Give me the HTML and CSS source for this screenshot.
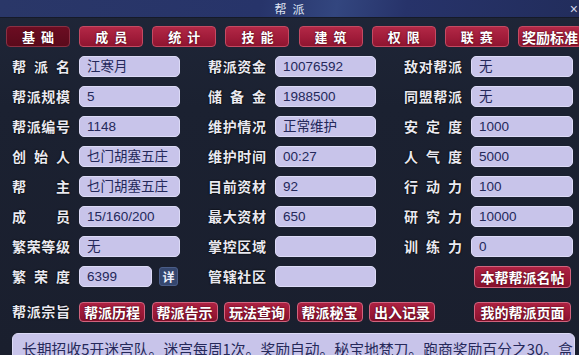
FILE: index.html
```html
<!DOCTYPE html>
<html lang="zh-CN">
<head>
  <meta charset="UTF-8" />
  <meta name="viewport" content="width=device-width, initial-scale=1.0"/>
  <title>帮派</title>
  <link rel="stylesheet" href="styles.css">
</head>
<body>
  <div class="window">
    <header class="titlebar">
      <span></span>
      <h1 class="title">帮派</h1>
      <span class="close">×</span>
    </header>

    <nav class="tabs">
      <button class="tab active">基础</button>
      <button class="tab">成员</button>
      <button class="tab">统计</button>
      <button class="tab">技能</button>
      <button class="tab">建筑</button>
      <button class="tab">权限</button>
      <button class="tab">联赛</button>
      <button class="tab tab-long">奖励标准</button>
    </nav>

    <!-- info grid: three columns of label + field -->
    <section class="info">
      <div class="cell"><span class="label">帮派名</span><span class="field">江寒月</span></div>
      <div class="cell"><span class="label">帮派资金</span><span class="field">10076592</span></div>
      <div class="cell"><span class="label">敌对帮派</span><span class="field">无</span></div>

      <div class="cell"><span class="label">帮派规模</span><span class="field">5</span></div>
      <div class="cell"><span class="label">储备金</span><span class="field">1988500</span></div>
      <div class="cell"><span class="label">同盟帮派</span><span class="field">无</span></div>

      <div class="cell"><span class="label">帮派编号</span><span class="field">1148</span></div>
      <div class="cell"><span class="label">维护情况</span><span class="field">正常维护</span></div>
      <div class="cell"><span class="label">安定度</span><span class="field">1000</span></div>

      <div class="cell"><span class="label">创始人</span><span class="field">乜门胡塞五庄</span></div>
      <div class="cell"><span class="label">维护时间</span><span class="field">00:27</span></div>
      <div class="cell"><span class="label">人气度</span><span class="field">5000</span></div>

      <div class="cell"><span class="label">帮主</span><span class="field">乜门胡塞五庄</span></div>
      <div class="cell"><span class="label">目前资材</span><span class="field">92</span></div>
      <div class="cell"><span class="label">行动力</span><span class="field">100</span></div>

      <div class="cell"><span class="label">成员</span><span class="field">15/160/200</span></div>
      <div class="cell"><span class="label">最大资材</span><span class="field">650</span></div>
      <div class="cell"><span class="label">研究力</span><span class="field">10000</span></div>

      <div class="cell"><span class="label">繁荣等级</span><span class="field">无</span></div>
      <div class="cell"><span class="label">掌控区域</span><span class="field"></span></div>
      <div class="cell"><span class="label">训练力</span><span class="field">0</span></div>

      <div class="cell"><span class="label">繁荣度</span><span class="field">6399</span><button class="detail">详</button></div>
      <div class="cell"><span class="label">管辖社区</span><span class="field"></span></div>
      <div class="cell cell-end"><button class="btn btn-wide">本帮帮派名帖</button></div>
    </section>

    <section class="actions">
      <span class="label">帮派宗旨</span>
      <div class="action-btns">
        <button class="btn">帮派历程</button>
        <button class="btn">帮派告示</button>
        <button class="btn">玩法查询</button>
        <button class="btn">帮派秘宝</button>
        <button class="btn">出入记录</button>
      </div>
      <button class="btn btn-wide btn-right">我的帮派页面</button>
    </section>

    <div class="motto">长期招收5开迷宫队。迷宫每周1次。奖励自动。秘宝地梵刀。跑商奖励百分之30。盒</div>
  </div>
</body>
</html>
```

FILE: styles.css
```css
* {
  box-sizing: border-box;
  margin: 0;
  padding: 0;
}

body {
  width: 579px;
  height: 355px;
  overflow: hidden;
  background: #1b2131;
  font-family: "Liberation Sans", "Noto Sans CJK SC", sans-serif;
  color: #fff;
}

.window {
  width: 579px;
  height: 355px;
  background: linear-gradient(180deg, #1f2638 0%, #1b2131 30%, #1a1f2e 100%);
}

/* Title bar */
.titlebar {
  height: 18px;
  display: grid;
  grid-template-columns: 1fr auto 1fr;
  align-items: center;
  background: linear-gradient(100deg, #2a3768 0%, #27346a 45%, #33467f 58%, #27336a 70%, #222d5c 100%);
  border-bottom: 1px solid #151a28;
}

.title {
  font-size: 12px;
  font-weight: 400;
  letter-spacing: 6px;
  color: #dfe3f2;
  padding-left: 6px;
}

.close {
  justify-self: end;
  font-size: 14px;
  line-height: 14px;
  color: #cfd4e6;
  margin-right: 1px;
}

/* Tabs */
.tabs {
  display: flex;
  gap: 9.15px;
  padding: 8px 0 0 6px;
  white-space: nowrap;
}

.tab {
  flex: none;
  width: 64px;
  height: 21px;
  border: 1px solid #c44a62;
  border-radius: 4px;
  background: linear-gradient(180deg, #b22846 0%, #a11c3a 55%, #8e1530 100%);
  color: #fff;
  font-family: "Noto Sans CJK SC", sans-serif;
  font-size: 13px;
  font-weight: 700;
  letter-spacing: 6px;
  padding-left: 6px;
  text-shadow: 0 0 2px #3a0010;
}

.tab.active {
  background: linear-gradient(180deg, #6c0d22 0%, #5a0a1b 100%);
  border-color: #8a3043;
}

.tab-long {
  letter-spacing: 0;
  padding: 0;
  font-size: 14px;
}

/* Info grid */
.info {
  display: grid;
  grid-template-columns: 168px 168px 169px;
  grid-auto-rows: 21px;
  column-gap: 28px;
  row-gap: 9px;
  padding: 9px 0 0 12px;
}

.cell {
  display: flex;
  align-items: center;
}

.cell-end {
  justify-content: flex-end;
  padding-right: 2px;
}

.label {
  flex: none;
  width: 58px;
  margin-right: 9px;
  font-family: "Noto Sans CJK SC", sans-serif;
  font-size: 14px;
  font-weight: 700;
  line-height: 21px;
  color: #e9e9f1;
  text-align: justify;
  text-align-last: justify;
  text-shadow: 0 0 2px #000, 0 0 1px #000;
}

.field {
  flex: 1;
  height: 21px;
  background: #c8c4ea;
  border: 1px solid #dcdaf6;
  border-radius: 5px;
  padding-left: 7px;
  font-size: 13.5px;
  line-height: 19px;
  color: #24285a;
  white-space: nowrap;
  overflow: hidden;
}

.detail {
  flex: none;
  width: 19px;
  height: 19px;
  margin: 0 2px 0 7px;
  background: #35476f;
  border: 1px solid #4a5d88;
  border-radius: 3px;
  color: #eef1fa;
  font-family: "Noto Sans CJK SC", sans-serif;
  font-size: 12px;
  font-weight: 700;
}

/* Red buttons */
.btn {
  flex: none;
  height: 20px;
  padding: 0 4px;
  background: linear-gradient(180deg, #ad2142 0%, #9a1836 60%, #86112c 100%);
  border: 1px solid #d1647e;
  border-radius: 4px;
  color: #fff;
  font-family: "Noto Sans CJK SC", sans-serif;
  font-size: 14px;
  font-weight: 700;
  line-height: 18px;
  white-space: nowrap;
  text-shadow: 0 0 2px #3a0010;
}

.btn-wide {
  width: 97px;
  height: 22px;
}

/* Action row */
.actions {
  display: flex;
  align-items: center;
  padding: 14px 8px 0 12px;
}

.action-btns {
  display: flex;
  gap: 6.5px;
}

.action-btns .btn {
  width: 66px;
}

.btn-right {
  margin-left: auto;
  height: 20px;
}

/* Motto box */
.motto {
  margin: 11px 4px 0 12px;
  height: 32px;
  background: #c8c4ea;
  border: 1px solid #dcdaf6;
  border-radius: 6px;
  padding: 6px 0 0 9px;
  font-family: "Noto Sans CJK SC", sans-serif;
  font-size: 14.8px;
  line-height: 18px;
  color: #26295a;
  white-space: nowrap;
  overflow: hidden;
}
```
